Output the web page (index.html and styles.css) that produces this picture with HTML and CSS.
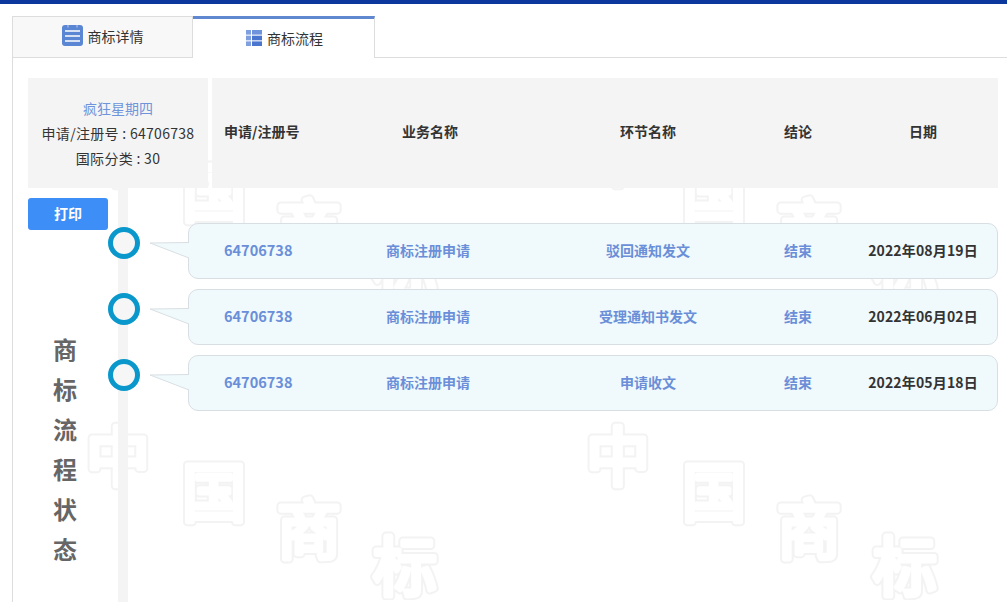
FILE: index.html
```html
<!DOCTYPE html>
<html lang="zh-CN">
<head>
    <meta charset="UTF-8">
    <meta name="viewport" content="width=device-width, initial-scale=1.0">
    <title>商标流程</title>
    <link rel="stylesheet" href="styles.css">
</head>
<body>
    <!-- background watermark -->
    <svg class="watermark" width="100%" height="100%" aria-hidden="true">
        <defs>
            <pattern id="wm" width="500" height="300" patternUnits="userSpaceOnUse">
                <g class="wm-outer">
                    <text x="118" y="180">中</text>
                    <text x="214" y="216">国</text>
                    <text x="309" y="253">商</text>
                    <text x="405" y="290">标</text>
                </g>
                <g class="wm-inner">
                    <text x="118" y="180">中</text>
                    <text x="214" y="216">国</text>
                    <text x="309" y="253">商</text>
                    <text x="405" y="290">标</text>
                </g>
            </pattern>
        </defs>
        <rect width="100%" height="100%" fill="url(#wm)"></rect>
    </svg>

    <div class="top-bar"></div>

    <div class="tabs">
        <div class="tab">
            <svg class="tab-icon" width="21" height="21" viewBox="0 0 21 21">
                <rect width="21" height="21" rx="3" fill="#5a86d3"></rect>
                <path d="M3 6h15M3 11h15M3 16h15" stroke="#fff" stroke-width="1.6"></path>
                <path d="M6 0v2.5M15 0v2.5" stroke="#a9c0e8" stroke-width="1.2"></path>
            </svg>
            <span>商标详情</span>
        </div>
        <div class="tab active">
            <svg class="tab-icon" width="16" height="16" viewBox="0 0 16 16">
                <rect x="0" y="0" width="5" height="4.6" fill="#7f9fe0"></rect>
                <rect x="6" y="0" width="10" height="4.6" fill="#6f94dc"></rect>
                <rect x="0" y="5.7" width="5" height="4.6" fill="#7f9fe0"></rect>
                <rect x="6" y="5.7" width="10" height="4.6" fill="#4a76cf"></rect>
                <rect x="0" y="11.4" width="5" height="4.6" fill="#7f9fe0"></rect>
                <rect x="6" y="11.4" width="10" height="4.6" fill="#4a76cf"></rect>
            </svg>
            <span>商标流程</span>
        </div>
    </div>

    <div class="content">
        <div class="head-row">
            <div class="info">
                <div class="info-name">疯狂星期四</div>
                <div class="info-line">申请/注册号 : 64706738</div>
                <div class="info-line">国际分类 : 30</div>
            </div>
            <div class="table-head">
                <div class="col-num">申请/注册号</div>
                <div>业务名称</div>
                <div>环节名称</div>
                <div>结论</div>
                <div>日期</div>
            </div>
        </div>

        <div class="flow">
            <div class="track"></div>
            <div class="side">
                <button class="print-btn">打印</button>
                <div class="flow-title">商标流程状态</div>
            </div>
            <div class="rows">
                <div class="row">
                    <div class="dot"></div>
                    <svg class="arrow" width="39" height="18" viewBox="0 0 39 18">
                        <polygon points="0,2 39,2 39,17" fill="#f0f9fc"></polygon>
                        <polyline points="39,1.5 0,2 39,17" fill="none" stroke="#d8dfe2"></polyline>
                    </svg>
                    <div class="card">
                        <div class="col-num">64706738</div>
                        <div>商标注册申请</div>
                        <div>驳回通知发文</div>
                        <div>结束</div>
                        <div class="col-date">2022年08月19日</div>
                    </div>
                </div>
                <div class="row">
                    <div class="dot"></div>
                    <svg class="arrow" width="39" height="18" viewBox="0 0 39 18">
                        <polygon points="0,2 39,2 39,17" fill="#f0f9fc"></polygon>
                        <polyline points="39,1.5 0,2 39,17" fill="none" stroke="#d8dfe2"></polyline>
                    </svg>
                    <div class="card">
                        <div class="col-num">64706738</div>
                        <div>商标注册申请</div>
                        <div>受理通知书发文</div>
                        <div>结束</div>
                        <div class="col-date">2022年06月02日</div>
                    </div>
                </div>
                <div class="row">
                    <div class="dot"></div>
                    <svg class="arrow" width="39" height="18" viewBox="0 0 39 18">
                        <polygon points="0,2 39,2 39,17" fill="#f0f9fc"></polygon>
                        <polyline points="39,1.5 0,2 39,17" fill="none" stroke="#d8dfe2"></polyline>
                    </svg>
                    <div class="card">
                        <div class="col-num">64706738</div>
                        <div>商标注册申请</div>
                        <div>申请收文</div>
                        <div>结束</div>
                        <div class="col-date">2022年05月18日</div>
                    </div>
                </div>
            </div>
        </div>
    </div>
</body>
</html>
```

FILE: styles.css
```css
* {
    box-sizing: border-box;
}

html, body {
    height: 100%;
}

body {
    margin: 0;
    display: flex;
    flex-direction: column;
    overflow: hidden;
    position: relative;
    background: #fff;
    color: #333;
    font-family: "Noto Sans CJK SC", "Noto Sans", sans-serif;
    font-size: 14px;
}

.watermark {
    position: absolute;
    top: 0;
    left: 0;
}

.watermark text {
    font-size: 64px;
    font-weight: 400;
    text-anchor: middle;
    font-family: "Noto Sans CJK SC", sans-serif;
}

.wm-outer {
    fill: #f3f3f3;
    stroke: #f3f3f3;
    stroke-width: 9px;
    stroke-linejoin: round;
}

.wm-inner {
    fill: #fff;
    stroke: #fff;
    stroke-width: 5px;
    stroke-linejoin: round;
}

.top-bar {
    height: 4px;
    background: #0c379c;
    position: relative;
}

.tabs {
    display: flex;
    height: 42px;
    margin: 12px 0 0 12px;
    border-bottom: 1px solid #ddd;
    position: relative;
}

.tab {
    width: 181px;
    display: flex;
    align-items: center;
    justify-content: center;
    gap: 5px;
    padding-bottom: 3px;
    background: #f8f8f8;
    border: 1px solid #ddd;
    border-bottom: 0;
}

.tab.active {
    width: 182px;
    padding-left: 2px;
    padding-bottom: 2px;
    margin-bottom: -1px;
    background: #fff;
    border-left: 0;
    border-top: 3px solid #5f88d0;
}

.content {
    flex: 1;
    display: flex;
    flex-direction: column;
    min-height: 0;
    margin-left: 12px;
    padding: 20px 9px 0 15px;
    border-left: 1px solid #ddd;
    position: relative;
}

.head-row {
    display: flex;
    gap: 4px;
    height: 110px;
}

.info {
    flex: none;
    width: 180px;
    display: flex;
    flex-direction: column;
    justify-content: center;
    align-items: center;
    background: #f4f4f4;
    line-height: 25px;
}

.info-name {
    color: #6f94db;
}

.info-line {
    letter-spacing: 0.3px;
}

.table-head {
    flex: 1;
    display: grid;
    grid-template-columns: 80px 252px 184px 116px 134px;
    align-items: center;
    padding: 0 0 4px 12px;
    background: #f4f4f4;
    color: #333;
    font-weight: 700;
    font-size: 14px;
    text-align: center;
}

.table-head .col-num {
    text-align: left;
    white-space: nowrap;
}

.flow {
    flex: 1;
    display: flex;
    min-height: 0;
    position: relative;
}

.track {
    position: absolute;
    top: 0;
    bottom: 0;
    left: 90px;
    width: 10px;
    background: #f4f4f4;
}

.side {
    width: 80px;
    padding-top: 10px;
}

.print-btn {
    display: block;
    width: 80px;
    height: 32px;
    padding: 0 0 2px;
    border: 0;
    border-radius: 3px;
    background: #3e8ef7;
    color: #fff;
    font-family: inherit;
    font-size: 14px;
    font-weight: 700;
}

.flow-title {
    width: 24px;
    margin: 99px 0 0 25px;
    color: #666;
    font-size: 24px;
    font-weight: 700;
    line-height: 40px;
}

.rows {
    flex: 1;
    display: flex;
    flex-direction: column;
    gap: 10px;
    padding-top: 35px;
    position: relative;
}

.row {
    display: flex;
    align-items: flex-start;
    height: 56px;
}

.dot {
    flex: none;
    width: 32px;
    height: 32px;
    margin-top: 4px;
    border: 5px solid #0a98cc;
    border-radius: 50%;
    background: #f6f6f6;
}

.arrow {
    flex: none;
    margin: 18px -1px 0 10px;
    position: relative;
    z-index: 1;
}

.card {
    flex: 1;
    height: 56px;
    display: grid;
    grid-template-columns: 80px 248px 192px 108px 142px;
    align-items: center;
    padding: 0 0 3px 35px;
    background: #f0f9fc;
    border: 1px solid #d8dfe2;
    border-radius: 10px;
    color: #6a8fd8;
    font-size: 14px;
    font-weight: 700;
    text-align: center;
}

.card .col-num {
    text-align: left;
    font-size: 14.5px;
}

.card .col-date {
    color: #333;
    font-size: 14px;
    letter-spacing: 0.15px;
}
```
